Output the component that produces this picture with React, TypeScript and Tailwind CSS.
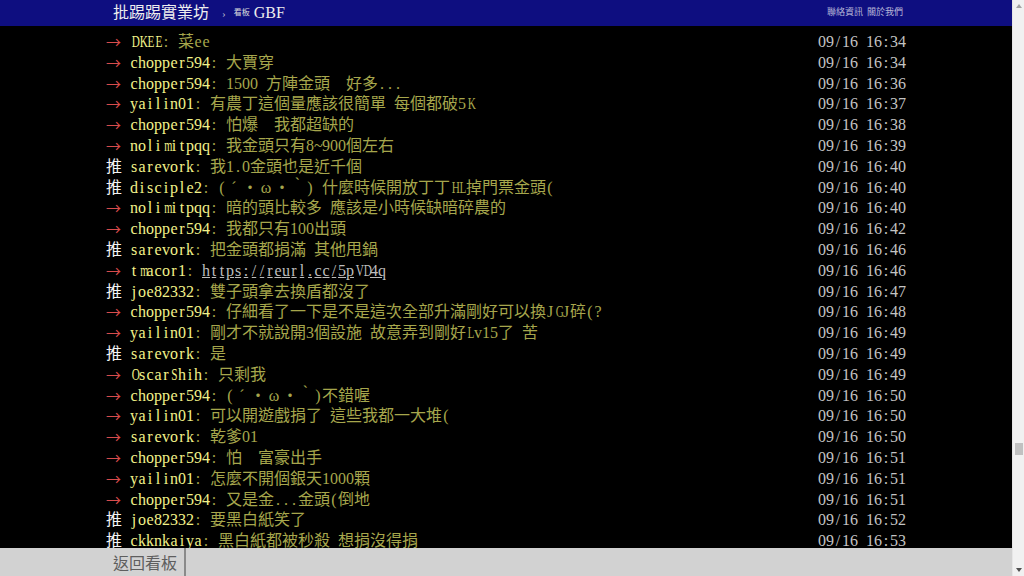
type Push = {
  tag: "推" | "→";
  user: string;
  text: string;
  time: string;
  link?: boolean;
};

const pushes: Push[] = [
  { tag: "→", user: "DKEE", text: "菜ee", time: "09/16 16:34" },
  { tag: "→", user: "chopper594", text: "大賈穿", time: "09/16 16:34" },
  { tag: "→", user: "chopper594", text: "1500 方陣金頭　好多...", time: "09/16 16:36" },
  { tag: "→", user: "yailin01", text: "有農丁這個量應該很簡單 每個都破5K", time: "09/16 16:37" },
  { tag: "→", user: "chopper594", text: "怕爆　我都超缺的", time: "09/16 16:38" },
  { tag: "→", user: "nolimitpqq", text: "我金頭只有8~900個左右", time: "09/16 16:39" },
  { tag: "推", user: "sarevork", text: "我1.0金頭也是近千個", time: "09/16 16:40" },
  { tag: "推", user: "disciple2", text: "(´・ω・｀) 什麼時候開放丁丁HL掉門票金頭(", time: "09/16 16:40" },
  { tag: "→", user: "nolimitpqq", text: "暗的頭比較多 應該是小時候缺暗碎農的", time: "09/16 16:40" },
  { tag: "→", user: "chopper594", text: "我都只有100出頭", time: "09/16 16:42" },
  { tag: "推", user: "sarevork", text: "把金頭都捐滿 其他甩鍋", time: "09/16 16:46" },
  { tag: "→", user: "tmacor1", text: "https://reurl.cc/5pVD4q", time: "09/16 16:46", link: true },
  { tag: "推", user: "joe82332", text: "雙子頭拿去換盾都沒了", time: "09/16 16:47" },
  { tag: "→", user: "chopper594", text: "仔細看了一下是不是這次全部升滿剛好可以換JGJ碎(?", time: "09/16 16:48" },
  { tag: "→", user: "yailin01", text: "剛才不就說開3個設施 故意弄到剛好Lv15了 苦", time: "09/16 16:49" },
  { tag: "推", user: "sarevork", text: "是", time: "09/16 16:49" },
  { tag: "→", user: "OscarShih", text: "只剩我", time: "09/16 16:49" },
  { tag: "→", user: "chopper594", text: "(´・ω・｀)不錯喔", time: "09/16 16:50" },
  { tag: "→", user: "yailin01", text: "可以開遊戲捐了 這些我都一大堆(", time: "09/16 16:50" },
  { tag: "→", user: "sarevork", text: "乾爹01", time: "09/16 16:50" },
  { tag: "→", user: "chopper594", text: "怕　富豪出手", time: "09/16 16:51" },
  { tag: "→", user: "yailin01", text: "怎麼不開個銀天1000顆", time: "09/16 16:51" },
  { tag: "→", user: "chopper594", text: "又是金...金頭(倒地", time: "09/16 16:51" },
  { tag: "推", user: "joe82332", text: "要黑白紙笑了", time: "09/16 16:52" },
  { tag: "推", user: "ckknkaiya", text: "黑白紙都被秒殺 想捐沒得捐", time: "09/16 16:53" },
];

// squeeze the glyphs that are wider than a half-width cell
function squeeze(ch: string) {
  if (ch === "m" || ch === "w") return "inline-block scale-x-[0.65]";
  if (/[A-HK-Z]/.test(ch)) return "inline-block scale-x-[0.7]";
  return "";
}

// BBS text sits on a terminal grid: half-width cells for ASCII, full-width for the rest
function Cells({ text, underline }: { text: string; underline?: boolean }) {
  return (
    <>
      {Array.from(text).map((ch, i) => {
        const half = ch.charCodeAt(0) < 0x80;
        return (
          <span
            key={i}
            className={
              (half ? "inline-block w-2 text-center" : "inline-block w-4 text-center") +
              (underline ? " underline" : "")
            }
          >
            {half ? (
              <span className={squeeze(ch)}>{ch === " " ? "\u00a0" : ch}</span>
            ) : (
              ch
            )}
          </span>
        );
      })}
    </>
  );
}

function PushRow({ push }: { push: Push }) {
  return (
    <div className="flex h-[20.8px] items-center justify-between whitespace-nowrap text-[16px] leading-[20.8px]">
      <div className="flex min-w-0 items-center">
        <span
          className={
            push.tag === "推"
              ? "w-6 shrink-0 text-[#f4f4f4]"
              : "w-6 shrink-0 font-['Noto_Sans_CJK_TC',sans-serif] text-[15px] text-[#d84c4c]"
          }
        >
          {push.tag}
        </span>
        <span className="shrink-0 text-[#f2f28a]">
          <Cells text={push.user} />
        </span>
        <span className="text-[#a6a64c]">
          <Cells text=": " />
          {push.link ? (
            <span className="text-[#bdbdbd]">
              <Cells text={push.text} underline />
            </span>
          ) : (
            <Cells text={push.text} />
          )}
        </span>
      </div>
      <span className="shrink-0 text-[#c4c4c4]">
        <Cells text={push.time} />
      </span>
    </div>
  );
}

export default function App() {
  return (
    <div className="flex h-[576px] w-full overflow-hidden font-['Liberation_Serif','Noto_Sans_CJK_TC',serif]">
      <div className="flex min-w-0 flex-1 flex-col">
        <header className="h-[26px] shrink-0 bg-[#0e0e80]">
          <div className="mx-auto flex h-full w-[800px] items-center justify-between pl-[7px] pr-[3px]">
            <div className="flex items-center">
              <span className="text-[16px] text-[#ededed]">批踢踢實業坊</span>
              <span className="ml-[13px] text-[11px] text-[#b4b4cc]">›</span>
              <span className="ml-[8px] text-[8px] text-[#dcdcdc]">看板</span>
              <span className="ml-[4px] text-[16px] text-[#ededed]">GBF</span>
            </div>
            <div className="flex gap-[4px] text-[9px] text-[#b8b8d8]">
              <span>聯絡資訊</span>
              <span>關於我們</span>
            </div>
          </div>
        </header>

        <main className="min-h-0 flex-1 overflow-hidden bg-black">
          <div className="mx-auto w-[800px] pt-[6px]">
            {pushes.map((push, i) => (
              <PushRow key={i} push={push} />
            ))}
          </div>
        </main>

        <footer className="h-[28px] shrink-0 bg-[#d2d2d2]">
          <div className="mx-auto flex h-full w-[800px]">
            <span className="flex h-full w-[80px] items-center border-r-2 border-[#8a8a8a] pl-[7px] font-['Noto_Sans_CJK_TC',sans-serif] text-[16px] text-[#5e5e5e]">
              返回看板
            </span>
          </div>
        </footer>
      </div>

      <div className="flex w-[12px] shrink-0 flex-col items-center border-l border-[#e6e6e6] bg-[#f1f1f1]">
        <div className="mt-[4px] h-0 w-0 border-x-[3px] border-b-[4px] border-x-transparent border-b-[#a3a3a3]" />
        <div className="mt-[435px] h-[12px] w-[8px] bg-[#c1c1c1]" />
        <div className="flex-1" />
        <div className="mb-[4px] h-0 w-0 border-x-[3px] border-t-[4px] border-x-transparent border-t-[#505050]" />
      </div>
    </div>
  );
}
